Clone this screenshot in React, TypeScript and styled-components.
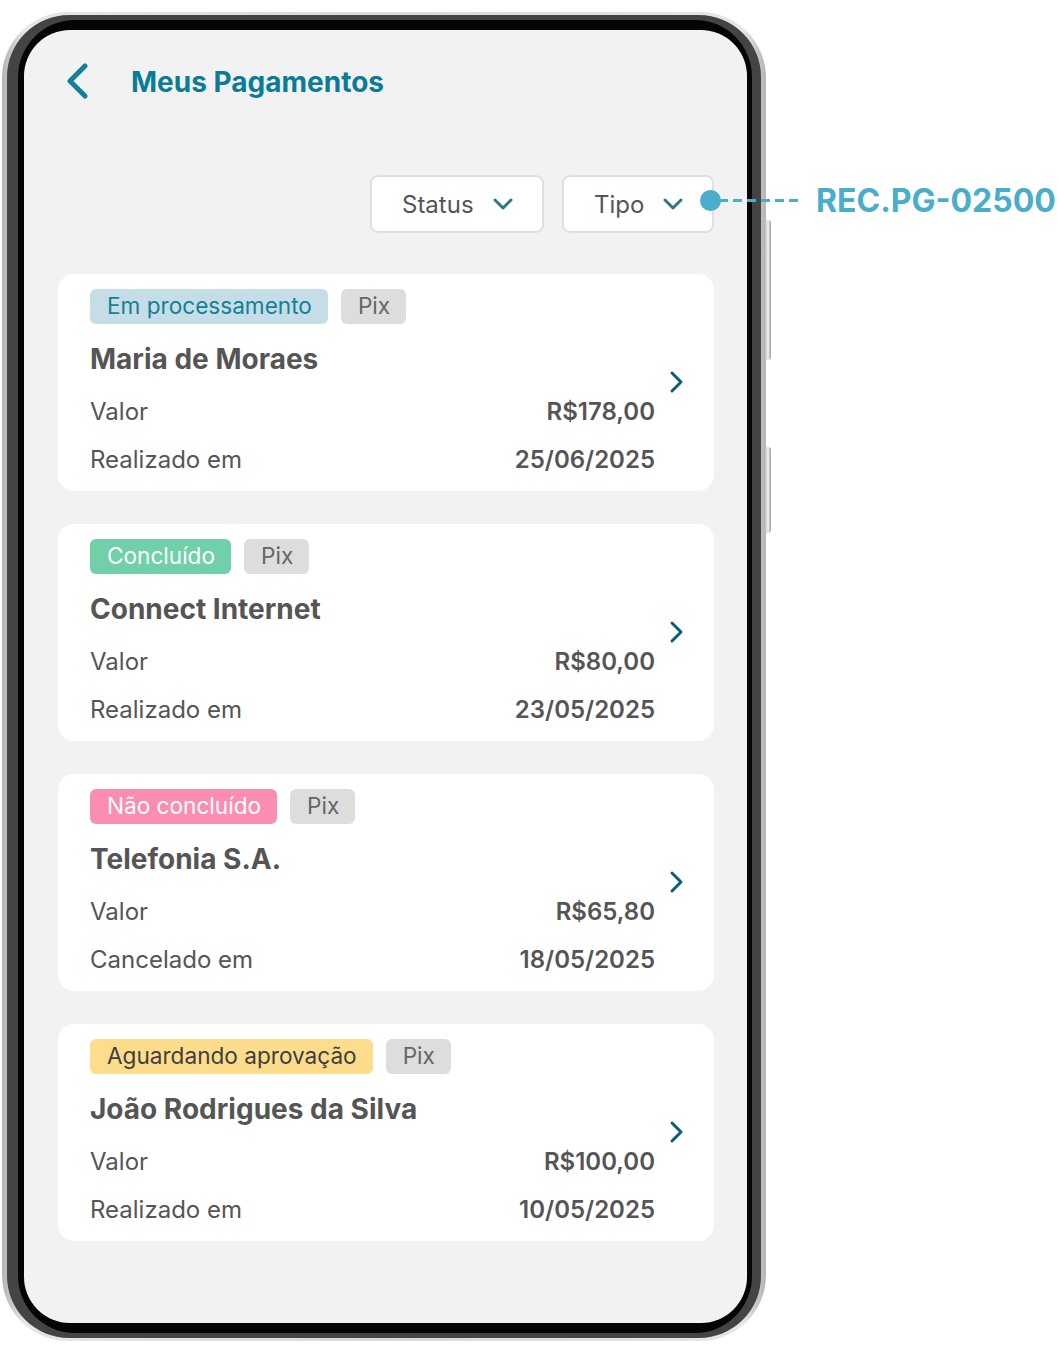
import React from "react";
import styled, { createGlobalStyle } from "styled-components";

const GlobalStyle = createGlobalStyle`
  html, body { margin: 0; padding: 0; background: #ffffff; }
  body { font-family: Inter, "Noto Sans", Arial, sans-serif; }
  * { box-sizing: border-box; }
`;

const Page = styled.div`
  position: relative;
  width: 1058px;
  height: 1352px;
  padding: 12px 0 0 2px;
`;

const Frame = styled.div`
  position: relative;
  width: 764px;
  height: 1329px;
  border-radius: 66px;
  padding: 3px 5px 3px 5px;
  background: linear-gradient(90deg, #b5b5b5 0%, #e6e6e6 3%, #d8d8d8 50%, #e6e6e6 97%, #b5b5b5 100%);
`;

const SideButton = styled.div<{ $top: number; $h: number }>`
  position: absolute;
  right: -5px;
  top: ${(p) => p.$top}px;
  width: 6px;
  height: ${(p) => p.$h}px;
  border-radius: 0 3px 3px 0;
  background: linear-gradient(90deg, #b8b8b8, #f6f6f6 50%, #9a9a9a);
`;

const Bezel = styled.div`
  height: 100%;
  border-radius: 62px;
  padding: 5px 9px 5px 11px;
  background: #444444;
`;

const BlackRing = styled.div`
  height: 100%;
  border-radius: 57px;
  padding: 10px 5px 10px 6px;
  background: #050505;
`;

const Screen = styled.div`
  height: 100%;
  border-radius: 46px;
  background: #f2f2f2;
  padding: 34px 33px 0 34px;
  overflow: hidden;
`;

const Header = styled.div`
  display: flex;
  align-items: center;
  height: 36px;
  padding-left: 7px;
  gap: 40px;
`;

const BackIcon = styled.svg`
  width: 26px;
  height: 38px;
  flex: none;
`;

const Title = styled.h1`
  margin: 0;
  font-size: 28px;
  font-weight: 700;
  color: #0b7b98;
  letter-spacing: 0;
`;

const Filters = styled.div`
  display: flex;
  justify-content: flex-end;
  gap: 18px;
  margin-top: 75px;
`;

const FilterButton = styled.button<{ $w: number }>`
  display: flex;
  align-items: center;
  justify-content: space-between;
  width: ${(p) => p.$w}px;
  height: 58px;
  padding: 0 29px 0 30px;
  border: 2px solid #e0e0e0;
  border-radius: 8px;
  background: #ffffff;
  font-family: Inter, "Noto Sans", Arial, sans-serif;
  font-size: 24px;
  color: #555555;
`;

const SmallChevron = styled.svg`
  width: 20px;
  height: 13px;
  flex: none;
`;

const List = styled.div`
  display: flex;
  flex-direction: column;
  gap: 33px;
  margin-top: 41px;
`;

const Card = styled.div`
  display: flex;
  align-items: center;
  height: 217px;
  background: #ffffff;
  border-radius: 16px;
  padding: 15px 30px 8px 32px;
`;

const CardBody = styled.div`
  flex: 1;
  display: flex;
  flex-direction: column;
  align-self: stretch;
`;

const Badges = styled.div`
  display: flex;
  gap: 13px;
`;

const Badge = styled.span<{ $bg: string; $fg: string }>`
  display: inline-flex;
  align-items: center;
  height: 35px;
  padding: 0 16px 0 17px;
  border-radius: 6px;
  background: ${(p) => p.$bg};
  color: ${(p) => p.$fg};
  font-size: 22.6px;
  line-height: 1;
`;

const Name = styled.div`
  margin-top: 17px;
  font-size: 28px;
  line-height: 36px;
  font-weight: 700;
  color: #555555;
`;

const Rows = styled.div`
  margin-top: 10px;
  display: flex;
  flex-direction: column;
`;

const Row = styled.div`
  display: flex;
  justify-content: space-between;
  align-items: center;
  height: 48px;
  font-size: 24px;
  color: #555555;
`;

const Value = styled.span`
  font-weight: 600;
`;

const ChevronRight = styled.svg`
  width: 15px;
  height: 24px;
  flex: none;
  margin: 0 0 9px 14px;
`;

const Annotation = styled.div`
  position: absolute;
  left: 700px;
  top: 182px;
  display: flex;
  align-items: center;
  height: 36px;
`;

const Dot = styled.span`
  width: 21px;
  height: 21px;
  border-radius: 50%;
  background: #4aadc9;
  flex: none;
`;

const Dash = styled.span`
  width: 84px;
  height: 3px;
  margin-left: -2px;
  background: repeating-linear-gradient(90deg, #4aadc9 0 9px, transparent 9px 14px);
  flex: none;
`;

const Code = styled.span`
  margin-left: 13px;
  font-size: 32px;
  font-weight: 700;
  color: #4aadc9;
  white-space: nowrap;
`;

type Payment = {
  status: string;
  bg: string;
  fg: string;
  name: string;
  value: string;
  dateLabel: string;
  date: string;
};

const payments: Payment[] = [
  { status: "Em processamento", bg: "#c5dde6", fg: "#167f98", name: "Maria de Moraes", value: "R$178,00", dateLabel: "Realizado em", date: "25/06/2025" },
  { status: "Concluído", bg: "#6fd0aa", fg: "#ffffff", name: "Connect Internet", value: "R$80,00", dateLabel: "Realizado em", date: "23/05/2025" },
  { status: "Não concluído", bg: "#fa8db1", fg: "#ffffff", name: "Telefonia S.A.", value: "R$65,80", dateLabel: "Cancelado em", date: "18/05/2025" },
  { status: "Aguardando aprovação", bg: "#fddc8c", fg: "#3f3f3f", name: "João Rodrigues da Silva", value: "R$100,00", dateLabel: "Realizado em", date: "10/05/2025" },
];

const Down = () => (
  <SmallChevron viewBox="0 0 20 13">
    <path d="M2 2 L10 10 L18 2" fill="none" stroke="#2b7a80" strokeWidth="3" strokeLinecap="round" strokeLinejoin="round" />
  </SmallChevron>
);

export default function App() {
  return (
    <>
      <GlobalStyle />
      <Page>
        <Frame>
          <SideButton $top={208} $h={140} />
          <SideButton $top={435} $h={86} />
          <Bezel>
            <BlackRing>
              <Screen>
                <Header>
                  <BackIcon viewBox="0 0 26 38">
                    <path d="M20 3 L5 18 L20 33" fill="none" stroke="#12809b" strokeWidth="5" strokeLinecap="round" strokeLinejoin="round" />
                  </BackIcon>
                  <Title>Meus Pagamentos</Title>
                </Header>
                <Filters>
                  <FilterButton $w={174}>
                    Status
                    <Down />
                  </FilterButton>
                  <FilterButton $w={152}>
                    Tipo
                    <Down />
                  </FilterButton>
                </Filters>
                <List>
                  {payments.map((p) => (
                    <Card key={p.name}>
                      <CardBody>
                        <Badges>
                          <Badge $bg={p.bg} $fg={p.fg}>{p.status}</Badge>
                          <Badge $bg="#dddddd" $fg="#666666">Pix</Badge>
                        </Badges>
                        <Name>{p.name}</Name>
                        <Rows>
                          <Row>
                            <span>Valor</span>
                            <Value>{p.value}</Value>
                          </Row>
                          <Row>
                            <span>{p.dateLabel}</span>
                            <Value>{p.date}</Value>
                          </Row>
                        </Rows>
                      </CardBody>
                      <ChevronRight viewBox="0 0 15 24">
                        <path d="M3 3 L12 12 L3 21" fill="none" stroke="#0d5f74" strokeWidth="3" strokeLinecap="round" strokeLinejoin="round" />
                      </ChevronRight>
                    </Card>
                  ))}
                </List>
              </Screen>
            </BlackRing>
          </Bezel>
        </Frame>
        <Annotation>
          <Dot />
          <Dash />
          <Code>REC.PG-02500</Code>
        </Annotation>
      </Page>
    </>
  );
}
